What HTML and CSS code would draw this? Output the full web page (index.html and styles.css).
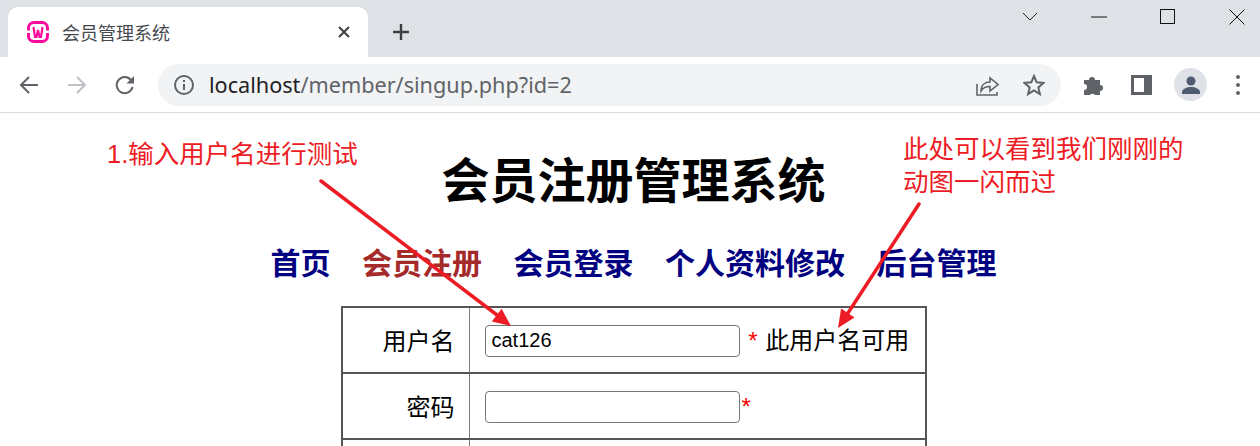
FILE: index.html
```html
<!DOCTYPE html>
<html lang="zh-CN">
<head>
    <meta charset="UTF-8">
    <title>会员管理系统</title>
    <link rel="stylesheet" href="styles.css">
</head>
<body>
    <div class="tabstrip">
        <div class="tab">
            <svg class="favicon" width="24" height="24" viewBox="0 0 24 24">
                <rect x="1" y="1" width="22" height="22" rx="7" fill="#ff0a9c"/>
                <rect x="4" y="4" width="16" height="16" rx="4" fill="#fff"/>
                <path d="M0 10.500h5v2.500H0zM19 10.500h5v2.500h-5z" fill="#fff"/>
                <path d="M7.500 7l1.500 10h1.500L12 10l1.500 7H15l1.500-10" fill="none" stroke="#ff0a9c" stroke-width="2.200"/>
            </svg>
            <span class="tab-title">会员管理系统</span>
            <svg class="tab-close" width="12" height="12" viewBox="0 0 12 12">
                <path d="M1 1l10 10M11 1L1 11" stroke="#3c4043" stroke-width="2"/>
            </svg>
        </div>
        <svg class="new-tab" width="18" height="18" viewBox="0 0 18 18">
            <path d="M9 1v16M1 9h16" stroke="#3c4043" stroke-width="2.400"/>
        </svg>
        <div class="window-controls">
            <svg width="16" height="10" viewBox="0 0 16 10"><path d="M1 1l7 7 7-7" fill="none" stroke="#222" stroke-width="1"/></svg>
            <svg width="16" height="2" viewBox="0 0 16 2"><path d="M0 1h16" stroke="#111" stroke-width="1"/></svg>
            <svg width="16" height="16" viewBox="0 0 16 16"><rect x=".5" y=".5" width="14" height="14" fill="none" stroke="#111"/></svg>
            <svg width="16" height="16" viewBox="0 0 16 16"><path d="M.5.5l15 15M15.500.5l-15 15" stroke="#111" stroke-width="1"/></svg>
        </div>
    </div>

    <div class="toolbar">
        <div class="nav-buttons">
            <svg width="22" height="22" viewBox="0 0 22 22"><path d="M20 11H3M11 3l-8 8 8 8" fill="none" stroke="#5f6368" stroke-width="2"/></svg>
            <svg width="22" height="22" viewBox="0 0 22 22"><path d="M2 11h17M11 3l8 8-8 8" fill="none" stroke="#bdc1c6" stroke-width="2"/></svg>
            <svg width="22" height="22" viewBox="0 0 22 22"><path d="M18.500 13a8 8 0 1 1-1.600-7" fill="none" stroke="#5f6368" stroke-width="2"/><path d="M20 2v7.500h-7.500z" fill="#5f6368"/></svg>
        </div>
        <div class="omnibox">
            <svg width="20" height="20" viewBox="0 0 20 20"><circle cx="10" cy="10" r="9" fill="none" stroke="#5f6368" stroke-width="2"/><path d="M9 9h2v6H9zM9 5h2v2H9z" fill="#5f6368"/></svg>
            <span class="url"><span class="host">localhost</span>/member/singup.php?id=2</span>
            <svg class="share" width="24" height="24" viewBox="0 0 24 24"><path d="M2 11v11h20v-3" fill="none" stroke="#5f6368" stroke-width="1.600"/><path d="M6 18c0-6 4-9 9-9V5l8 6.500-8 6.500v-4.500c-4 0-7 1-9 4.500z" fill="none" stroke="#5f6368" stroke-width="1.600"/></svg>
            <svg class="star" width="22" height="22" viewBox="0 0 22 22"><path d="M11 2l2.700 6.300 6.800.6-5.200 4.500 1.600 6.700-5.900-3.600-5.900 3.600 1.600-6.700L1.500 8.900l6.800-.6z" fill="none" stroke="#5f6368" stroke-width="2"/></svg>
        </div>
        <svg class="ext" width="22" height="22" viewBox="0 0 22 22"><path d="M1 6h5a3 3 0 0 1 6 0h5v5a3 3 0 0 1 0 6v4h-5a3 3 0 0 0-5 0H1v-5a3 3 0 0 0 0-6z" fill="#5f6368"/></svg>
        <svg class="side" width="21" height="20" viewBox="0 0 21 20"><path d="M0 0h21v20H0zM3 3v14h10V3z" fill="#5f6368" fill-rule="evenodd"/></svg>
        <div class="avatar">
            <svg width="20" height="20" viewBox="0 0 20 20"><circle cx="10" cy="6" r="4.500" fill="#4f5b70"/><path d="M1 19v-2c0-3 5-5 9-5s9 2 9 5v2z" fill="#4f5b70"/></svg>
        </div>
        <div class="menu-dots"><i></i><i></i><i></i></div>
    </div>

    <div class="page">
        <h1>会员注册管理系统</h1>
        <nav class="nav">
            <a href="#">首页</a>
            <a href="#" class="current">会员注册</a>
            <a href="#">会员登录</a>
            <a href="#">个人资料修改</a>
            <a href="#">后台管理</a>
        </nav>
        <table class="form-table">
            <tr>
                <td class="label">用户名</td>
                <td class="field"><input type="text" value="cat126"> <span class="req">*</span> <span class="msg">此用户名可用</span></td>
            </tr>
            <tr>
                <td class="label">密码</td>
                <td class="field"><input type="password"><span class="req">*</span></td>
            </tr>
            <tr>
                <td class="label">&nbsp;</td>
                <td class="field">&nbsp;</td>
            </tr>
        </table>

        <div class="note note-left">1.输入用户名进行测试</div>
        <div class="note note-right">此处可以看到我们刚刚的<br>动图一闪而过</div>
        <svg class="arrows" width="1260" height="333" viewBox="0 113 1260 333">
            <path d="M321 181L497 315" stroke="#ed1c24" stroke-width="3.500" stroke-linecap="round"/>
            <path d="M511 326l-19.200-4.600 9.800-12.700z" fill="#ed1c24"/>
            <path d="M919 204L848 313" stroke="#ed1c24" stroke-width="3.500" stroke-linecap="round"/>
            <path d="M838 328l3.100-19.400 13.400 8.800z" fill="#ed1c24"/>
        </svg>
    </div>
</body>
</html>
```

FILE: styles.css
```css
html, body {
    margin: 0;
    height: 446px;
    overflow: hidden;
}
body {
    font-family: "Liberation Sans", "Noto Sans CJK SC", sans-serif;
    background-color: #fff;
    color: #000;
}
.tabstrip {
    display: flex;
    align-items: flex-end;
    height: 57px;
    background-color: #dee1e6;
}
.tab {
    display: flex;
    align-items: center;
    width: 360px;
    height: 50px;
    margin-left: 8px;
    background-color: #fff;
    border-radius: 10px 10px 0 0;
    box-sizing: border-box;
    padding: 0 18px;
}
.tab-title {
    flex: 1;
    margin-left: 12px;
    font-family: "Noto Sans CJK SC", sans-serif;
    font-size: 18px;
    color: #45494d;
}
.new-tab {
    margin: 0 0 16px 24px;
}
.window-controls {
    display: flex;
    align-items: center;
    gap: 53px;
    margin-left: auto;
    height: 33px;
    align-self: flex-start;
    padding-right: 15px;
}
.toolbar {
    display: flex;
    align-items: center;
    height: 55px;
    border-bottom: 1px solid #dadce0;
    padding-left: 18px;
}
.nav-buttons {
    display: flex;
    gap: 26px;
    margin-right: 22px;
}
.omnibox {
    display: flex;
    align-items: center;
    width: 903px;
    height: 42px;
    box-sizing: border-box;
    padding: 0 16px;
    border-radius: 21px;
    background-color: #f1f3f4;
}
.url {
    flex: 1;
    margin-left: 15px;
    font-family: "Noto Sans", sans-serif;
    font-size: 21.650px;
    line-height: 42px;
    color: #5f6368;
}
.host {
    color: #202124;
}
.share {
    margin-right: 24px;
}
.ext {
    margin-left: 22px;
}
.side {
    margin-left: 26px;
}
.avatar {
    display: flex;
    align-items: center;
    justify-content: center;
    width: 33px;
    height: 33px;
    margin-left: 22px;
    border-radius: 50%;
    background-color: #dee1e6;
}
.menu-dots {
    display: flex;
    flex-direction: column;
    gap: 4px;
    margin-left: 29px;
}
.menu-dots i {
    display: block;
    width: 4px;
    height: 4px;
    border-radius: 50%;
    background-color: #5f6368;
}
.page {
    position: relative;
    height: 333px;
    overflow: hidden;
    padding-left: 7px;
    text-align: center;
}
h1 {
    margin: 0;
    padding-top: 32px;
    font-family: "Noto Sans CJK SC", sans-serif;
    font-size: 48px;
    line-height: 64px;
}
.nav {
    display: flex;
    justify-content: center;
    gap: 31.500px;
    margin-top: 32px;
}
.nav a {
    font-family: "Noto Sans CJK SC", sans-serif;
    font-size: 30px;
    font-weight: bold;
    line-height: 40px;
    color: #000080;
    text-decoration: none;
}
.nav a.current {
    color: #a52a2a;
}
.form-table {
    width: 586px;
    margin: 25px auto 0;
    border-collapse: collapse;
    border: 2px solid #555;
    font-size: 24px;
}
.form-table tr {
    height: 66px;
    border-bottom: 2px solid #555;
}
.label {
    width: 112px;
    padding: 0 14px 2px 0;
    text-align: right;
    border-right: 1px solid #808080;
}
.field {
    padding: 0 15px;
    text-align: left;
    white-space: nowrap;
    line-height: 34px;
}
.field > * {
    vertical-align: middle;
}
.field input {
    width: 255px;
    height: 32px;
    box-sizing: border-box;
    padding: 0 6px;
    font-family: "Liberation Sans", sans-serif;
    font-size: 20px;
    border: 1px solid #767676;
    border-radius: 4px;
}
.req {
    margin-left: 2px;
    color: #f00;
}
.msg {
    margin-left: 1px;
}
.note {
    position: absolute;
    font-size: 25.500px;
    line-height: 33px;
    color: #ed1c24;
    text-align: left;
}
.note-left {
    left: 107px;
    top: 25px;
}
.note-right {
    left: 903px;
    top: 20px;
}
.arrows {
    position: absolute;
    left: 0;
    top: 0;
    pointer-events: none;
}
```
